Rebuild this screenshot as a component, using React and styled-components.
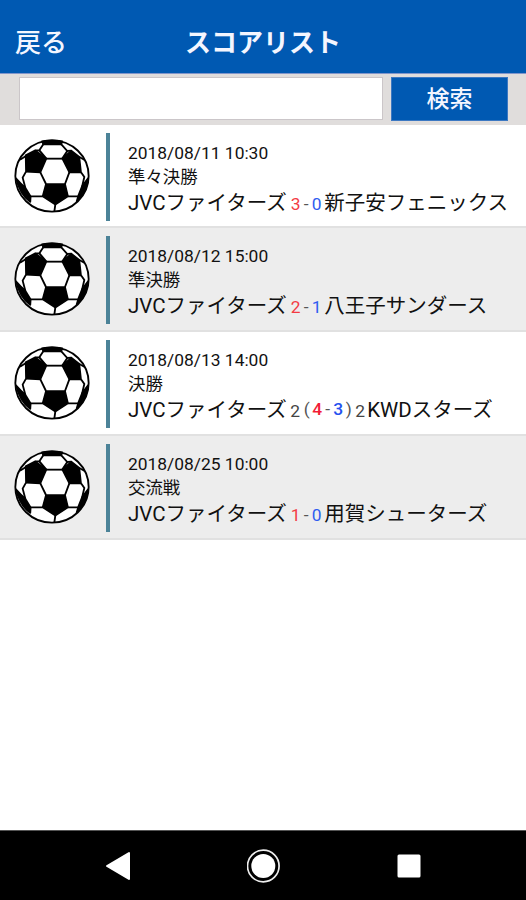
import React from "react";
import styled, { createGlobalStyle } from "styled-components";

const games = [
  {
    date: "2018/08/11 10:30",
    round: "準々決勝",
    home: "JVCファイターズ",
    away: "新子安フェニックス",
    score: [3, 0]
  },
  {
    date: "2018/08/12 15:00",
    round: "準決勝",
    home: "JVCファイターズ",
    away: "八王子サンダース",
    score: [2, 1]
  },
  {
    date: "2018/08/13 14:00",
    round: "決勝",
    home: "JVCファイターズ",
    away: "KWDスターズ",
    score: [2, 2],
    penalty: [4, 3]
  },
  {
    date: "2018/08/25 10:00",
    round: "交流戦",
    home: "JVCファイターズ",
    away: "用賀シューターズ",
    score: [1, 0]
  }
];

const SoccerBall = () => (
  <Ball viewBox="42 42 228 222" preserveAspectRatio="none">
    <ellipse cx="156" cy="153" rx="111" ry="108" fill="#fff" />
    <g fill="#000" stroke="#000" strokeWidth="5" strokeLinejoin="round">
      <path d="M126 49 Q156 43 187 49 L184 58 L130 58 Z" />
      <path d="M77 91 L106 76 L139 101 L121 142 L78 140 Z" />
      <path d="M187 101 L214 77 L238 96 L243 142 L208 142 Z" />
      <path d="M138 177 L195 177 L204 214 L166 239 L128 214 Z" />
      <path d="M48 160 Q62 176 76 188 L92 214 L91 231 Q60 210 48 160 Z" />
      <path d="M264 160 L246 184 L235 212 L230 229 Q256 208 264 160 Z" />
    </g>
    <g fill="none" stroke="#000" strokeWidth="5.5">
      <path d="M130 58 L118 76 L106 76 M184 58 L202 78 L214 77" />
      <path d="M139 101 H187" />
      <path d="M78 93 L60 104 M238 96 L254 105" />
      <path d="M121 142 L138 177 M208 142 L195 177" />
      <path d="M78 140 L68 158 L76 188 M243 142 L253 156 L246 186" />
      <path d="M91 214 H128 M204 214 H236 M166 238 L163 260" />
    </g>
    <path d="M118 76 L139 101 M202 78 L187 101" stroke="#000" strokeWidth="6" />
    <ellipse
      cx="156"
      cy="153"
      rx="110"
      ry="107"
      fill="none"
      stroke="#000"
      strokeWidth="5.5"
    />
  </Ball>
);

const Score = ({ score, penalty }) =>
  penalty ? (
    <ScoreBox $width={75}>
      <Total>{score[0]}</Total>
      <Shootout>
        <Mark $width={10}>(</Mark>
        <Point $color="#f21c36" $bold>
          {penalty[0]}
        </Point>
        <Mark $width={10}>-</Mark>
        <Point $color="#2451ef" $bold>
          {penalty[1]}
        </Point>
        <Mark $width={10}>)</Mark>
      </Shootout>
      <Total>{score[1]}</Total>
    </ScoreBox>
  ) : (
    <ScoreBox $width={32}>
      <Point $color="#f33b43">{score[0]}</Point>
      <Mark $width={9}>-</Mark>
      <Point $color="#2f5cf0">{score[1]}</Point>
    </ScoreBox>
  );

const App = () => (
  <Screen>
    <GlobalStyle />
    <Header>
      <Back>戻る</Back>
      <Title>スコアリスト</Title>
    </Header>
    <SearchBar>
      <SearchInput />
      <SearchButton>検索</SearchButton>
    </SearchBar>
    <List>
      {games.map(game => (
        <Row key={game.date}>
          <SoccerBall />
          <Divider />
          <Info>
            <Small>{game.date}</Small>
            <Small>{game.round}</Small>
            <Teams>
              <span>{game.home}</span>
              <Score score={game.score} penalty={game.penalty} />
              <span>{game.away}</span>
            </Teams>
          </Info>
        </Row>
      ))}
    </List>
    <NavBar>
      <svg width="26" height="30" viewBox="0 0 26 30">
        <path
          d="M2 15 L24 2 V28 Z"
          fill="#fff"
          stroke="#fff"
          strokeWidth="2"
          strokeLinejoin="round"
        />
      </svg>
      <svg width="34" height="34" viewBox="0.7 0 34 34">
        <circle cx="17" cy="17" r="15.8" fill="none" stroke="#eee" strokeWidth="1.7" />
        <circle cx="17" cy="17" r="12" fill="#fff" />
      </svg>
      <svg width="24" height="24" viewBox="0 0 24 24">
        <rect x="0.5" y="0.5" width="23" height="23" rx="1.5" fill="#fff" />
      </svg>
    </NavBar>
  </Screen>
);

const GlobalStyle = createGlobalStyle`
  body {
    margin: 0;
    background: #fff;
    font-family: Roboto, "Noto Sans CJK JP", sans-serif;
    color: #111;
  }
  * {
    box-sizing: border-box;
  }
`;

const Screen = styled.div`
  display: flex;
  flex-direction: column;
  height: 900px;
  width: 526px;
  overflow: hidden;
`;

const Header = styled.header`
  display: grid;
  grid-template-columns: 120px 1fr 120px;
  align-items: center;
  flex: none;
  height: 74px;
  padding-top: 12px;
  background: #0059b2;
  border-bottom: 1px solid #8296cb;
  color: #f4f6ff;
`;

const Back = styled.div`
  padding-left: 15px;
  font-size: 26px;
  font-weight: 500;
  line-height: 38px;
`;

const Title = styled.h1`
  margin: 0;
  text-align: center;
  font-size: 26px;
  font-weight: 700;
  line-height: 38px;
`;

const SearchBar = styled.div`
  display: flex;
  flex: none;
  gap: 8px;
  height: 50.6px;
  padding: 3px 18px 3px 19px;
  background: #e0dddc;
`;

const SearchInput = styled.input`
  width: 364px;
  height: 43px;
  padding: 0 8px;
  border: 1px solid #cbc6c9;
  border-radius: 0;
  background: #fff;
  font-size: 20px;
  outline: none;
`;

const SearchButton = styled.button`
  width: 117px;
  height: 44px;
  padding: 2px 0 0;
  border: 1px solid #3c78c2;
  background: #0059b2;
  color: #f4f6ff;
  font-family: inherit;
  font-size: 23px;
  font-weight: 500;
  line-height: 40px;
`;

const List = styled.div`
  flex: 1;
`;

const Row = styled.div`
  display: flex;
  height: 103.75px;
  padding: 8px 0 0 14px;
  border-bottom: 2px solid #e1e1e1;
  background: #fff;
  &:nth-child(even) {
    background: #ededed;
  }
`;

const Ball = styled.svg`
  flex: none;
  width: 76px;
  height: 74px;
  margin-top: 6px;
`;

const Divider = styled.div`
  flex: none;
  width: 4px;
  height: 88px;
  margin: 0 18px 0 16px;
  background: #4c8398;
`;

const Info = styled.div`
  padding-top: 8px;
`;

const Small = styled.div`
  height: 24px;
  font-size: 17.4px;
  line-height: 24px;
  white-space: nowrap;
`;

const Teams = styled.div`
  display: flex;
  align-items: baseline;
  height: 28px;
  font-size: 20.5px;
  line-height: 28px;
  white-space: nowrap;
`;

const ScoreBox = styled.span`
  display: inline-flex;
  align-items: baseline;
  justify-content: space-between;
  width: ${props => props.$width}px;
  margin: 0 2px 0 3.5px;
  font-size: 17.4px;
`;

const Point = styled.span`
  width: 11px;
  text-align: center;
  color: ${props => props.$color};
  font-weight: ${props => (props.$bold ? 500 : 400)};
`;

const Mark = styled.span`
  width: ${props => props.$width}px;
  text-align: center;
  color: #555;
`;

const Total = styled.span`
  width: 10px;
  color: #444;
`;

const Shootout = styled.span`
  display: inline-flex;
  position: relative;
  top: -2px;
`;

const NavBar = styled.nav`
  display: flex;
  align-items: center;
  justify-content: space-between;
  flex: none;
  height: 70px;
  padding: 0 105px 0 105px;
  border-top: 1px solid #555;
  background: #000;
`;

export default App;
